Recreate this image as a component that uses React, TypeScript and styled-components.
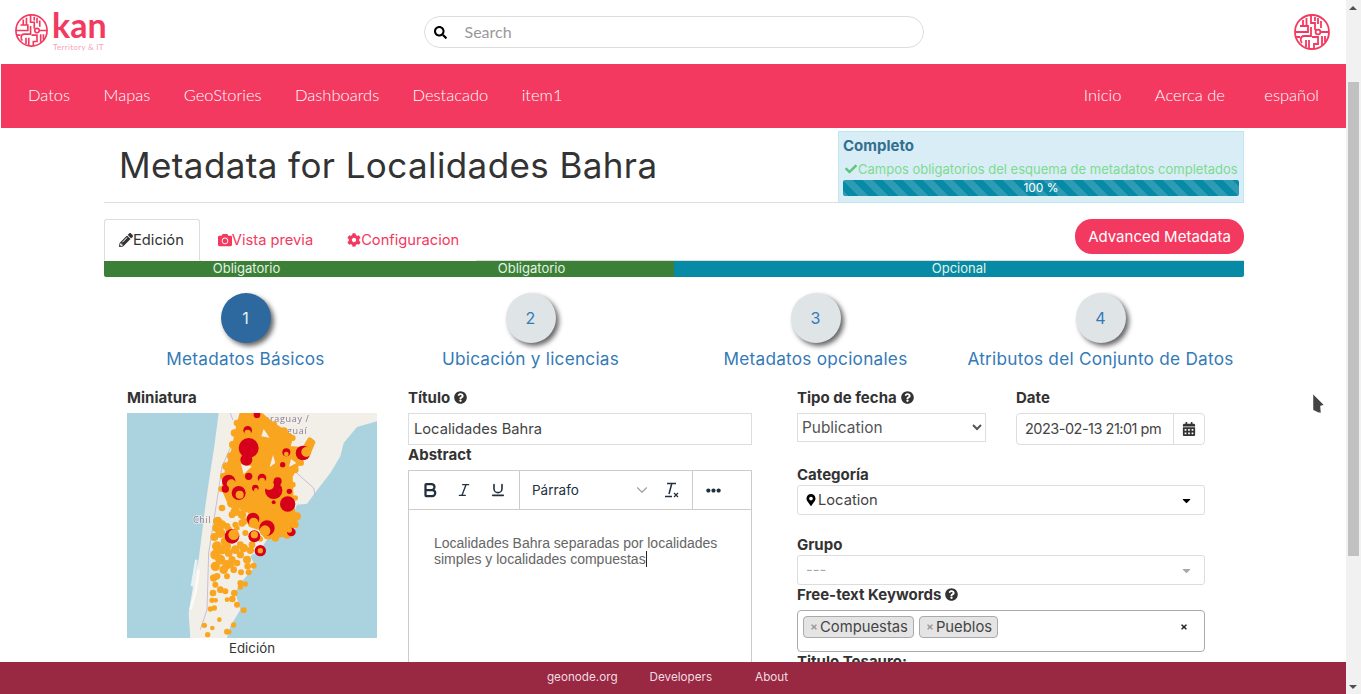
import { createGlobalStyle } from "styled-components";
import styled from "styled-components";
import {
  FaCalendarAlt,
  FaCamera,
  FaCaretDown,
  FaCheck,
  FaCog,
  FaEllipsisH,
  FaMapMarkerAlt,
  FaPencilAlt,
  FaQuestionCircle,
  FaSearch,
  FaTimes,
} from "react-icons/fa";
import { Bold, ChevronDown, Italic, Underline } from "lucide-react";

const PINK = "#f33960";
const ORANGE = "#f9a51f";
const RED = "#d7001a";
const BODY_FONT = `Inter, "Open Sans", "Liberation Sans", sans-serif`;
const NAV_FONT = `Lato, "Noto Sans", "Liberation Sans", sans-serif`;

const GlobalStyle = createGlobalStyle`
  html, body {
    margin: 0;
    height: 100%;
    overflow: hidden;
    background: #fff;
    font-family: ${BODY_FONT};
    color: #333;
  }
  * { box-sizing: border-box; }
`;

const Screen = styled.div`
  display: flex;
  height: 694px;
  position: relative;
`;

const Main = styled.div`
  flex: 1;
  min-width: 0;
  position: relative;
  overflow: hidden;
`;

const Header = styled.header`
  height: 64px;
  display: grid;
  grid-template-columns: 1fr auto 1fr;
  align-items: center;
  padding: 0 16px 0 15px;
`;

const Brand = styled.div`
  height: 33px;
  margin-top: -3px;
  display: flex;
  align-items: flex-start;
  gap: 4px;
  color: ${PINK};
`;

const BrandText = styled.div`
  display: flex;
  flex-direction: column;
  font-family: ${NAV_FONT};
  margin-top: -6px;
`;

const BrandName = styled.span`
  font-size: 34px;
  line-height: 34px;
  font-weight: 700;
`;

const BrandSub = styled.span`
  font-size: 8px;
  line-height: 10px;
  color: #f8a3b6;
  letter-spacing: 0.3px;
  padding-left: 1px;
`;

const SearchBox = styled.div`
  width: 500px;
  height: 32px;
  margin-left: 2px;
  display: flex;
  align-items: center;
  gap: 18px;
  padding: 0 9px 2px;
  border: 1px solid #ddd;
  border-radius: 16px;
  font-family: ${NAV_FONT};
  font-size: 16px;
  color: #999;
  svg { color: #000; font-size: 13px; margin-top: 2px; }
`;

const HeaderLogo = styled.div`
  width: 36px;
  height: 36px;
  justify-self: end;
`;

const NavBar = styled.nav`
  height: 64px;
  margin-left: 1px;
  background: ${PINK};
  display: flex;
  align-items: center;
  justify-content: space-between;
  padding: 0 27px 2px;
  font-family: ${NAV_FONT};
  font-size: 16.5px;
  font-weight: 300;
  color: #fff;
`;

const NavGroup = styled.div`
  display: flex;
  gap: 33.4px;
`;

const NavLanguage = styled.span`
  margin-left: 6px;
`;

const Container = styled.div`
  width: 1140px;
  margin-left: 104px;
`;

const TitleRow = styled.div`
  display: flex;
  height: 75px;
`;

const TitleBlock = styled.div`
  flex: 1;
  border-bottom: 1px solid #ddd;
  padding-left: 15px;
`;

const PageTitle = styled.h1`
  margin: 17px 0 0;
  font-size: 35px;
  line-height: 40px;
  letter-spacing: 0.4px;
  font-weight: 400;
  color: #333;
`;

const StatusBox = styled.div`
  width: 406px;
  height: 72px;
  margin-top: 3px;
  background: #d9edf7;
  border: 1px solid #bce8f1;
  padding: 6px 4px 0;
`;

const StatusTitle = styled.div`
  font-size: 15px;
  line-height: 16px;
  font-weight: 700;
  color: #31708f;
`;

const StatusText = styled.div`
  display: flex;
  align-items: center;
  gap: 1px;
  margin: 7px 0 0 2px;
  font-size: 13px;
  line-height: 16px;
  color: #7ddb8f;
  white-space: nowrap;
  svg { font-size: 12px; color: #5cc77a; }
`;

const StripedBar = styled.div`
  height: 16px;
  margin-top: 3px;
  border-radius: 2px;
  background-color: #078aa6;
  background-image: linear-gradient(
    45deg,
    rgba(255, 255, 255, 0.15) 25%,
    transparent 25%,
    transparent 50%,
    rgba(255, 255, 255, 0.15) 50%,
    rgba(255, 255, 255, 0.15) 75%,
    transparent 75%,
    transparent
  );
  background-size: 20px 20px;
  color: #fff;
  font-size: 12px;
  line-height: 16px;
  text-align: center;
`;

const TabsRow = styled.div`
  display: flex;
  justify-content: space-between;
  height: 58px;
  padding-top: 16px;
  border-bottom: 1px solid #ddd;
`;

const Tabs = styled.div`
  display: flex;
  align-items: stretch;
`;

const Tab = styled.div<{ $active?: boolean }>`
  display: flex;
  align-items: center;
  height: 42px;
  padding: ${(p) => (p.$active ? "0 15px 1px 14px" : "0 16px 2px")};
  margin-right: ${(p) => (p.$active ? "1px" : "0")};
  font-size: 14.7px;
  color: ${(p) => (p.$active ? "#333" : PINK)};
  background: #fff;
  border: 1px solid ${(p) => (p.$active ? "#ddd" : "transparent")};
  border-bottom: ${(p) => (p.$active ? "1px solid #fff" : "none")};
  border-radius: 3px 3px 0 0;
  svg { font-size: 14px; margin-top: 1px; }
`;

const AdvancedButton = styled.button`
  height: 35px;
  width: 169px;
  padding: 0;
  border: none;
  border-radius: 17px;
  background: ${PINK};
  color: #fff;
  font-family: ${BODY_FONT};
  font-size: 15px;
`;

const RequirementBar = styled.div`
  display: flex;
  height: 16px;
  border-radius: 0 0 2px 2px;
  overflow: hidden;
`;

const RequirementCell = styled.div<{ $color: string; $grow: number }>`
  flex: ${(p) => p.$grow};
  background: ${(p) => p.$color};
  color: #e4f3e4;
  font-size: 13px;
  line-height: 15px;
  text-align: center;
`;

const Steps = styled.div`
  display: grid;
  grid-template-columns: repeat(4, 285px);
  margin: 16px 0 0 -1px;
`;

const Step = styled.div`
  display: flex;
  flex-direction: column;
  align-items: center;
`;

const StepCircle = styled.div<{ $active?: boolean }>`
  width: 50px;
  height: 50px;
  border-radius: 50%;
  display: flex;
  align-items: center;
  justify-content: center;
  font-size: 16px;
  color: ${(p) => (p.$active ? "#e8f0f6" : "#337ab7")};
  background: ${(p) => (p.$active ? "#2d699e" : "#dfe4e6")};
  box-shadow: 3px 3px 5px #666;
`;

const StepLabel = styled.div`
  margin-top: 6px;
  font-size: 17.2px;
  line-height: 20px;
  letter-spacing: 0.25px;
  color: #337ab7;
  white-space: nowrap;
`;

const FormGrid = styled.div`
  display: grid;
  grid-template-columns: 281px 389px 408px;
  padding-left: 23px;
  margin-top: 21px;
`;

const FieldLabel = styled.div<{ $gap?: number }>`
  display: flex;
  align-items: center;
  gap: 4px;
  height: 16px;
  padding-bottom: 2px;
  margin-bottom: ${(p) => p.$gap ?? 7}px;
  font-size: 15px;
  font-weight: 700;
  color: #333;
  white-space: nowrap;
  svg { font-size: 13px; }
`;

const Thumbnail = styled.svg`
  display: block;
  width: 250px;
  height: 225px;
  filter: blur(0.4px);
`;

const ThumbCaption = styled.div`
  width: 250px;
  margin-top: 2px;
  text-align: center;
  font-size: 13.3px;
  line-height: 16px;
`;

const TextField = styled.input`
  display: block;
  width: 344px;
  height: 32px;
  margin-bottom: 2px;
  padding: 0 5px 1px;
  border: 1px solid #ddd;
  border-radius: 0;
  outline: none;
  font-family: ${BODY_FONT};
  font-size: 14.7px;
  color: #444;
`;

const Editor = styled.div`
  width: 344px;
  height: 300px;
  border: 1px solid #ccc;
`;

const EditorToolbar = styled.div`
  display: flex;
  height: 39px;
  border-bottom: 1px solid #ccc;
`;

const ToolGroup = styled.div<{ $width: number }>`
  width: ${(p) => p.$width}px;
  display: flex;
  align-items: center;
  border-right: 1px solid #ccc;
  color: #222f3e;
  &:last-child { border-right: none; padding-left: 13px; }
`;

const ToolButton = styled.div`
  width: 34px;
  margin-left: 4px;
  margin-right: -4px;
  display: flex;
  justify-content: center;
`;

const BlockSelect = styled.div`
  flex: 1;
  display: flex;
  align-items: center;
  padding: 0 12px;
  font-size: 13.5px;
  svg.chev { color: #9aa1a8; margin: 0 11px 0 auto; }
`;

const EditorBody = styled.div`
  padding: 25px;
  font-family: "Liberation Sans", Arial, sans-serif;
  font-size: 14px;
  line-height: 16px;
  color: #666;
`;

const Caret = styled.span`
  display: inline-block;
  width: 1px;
  height: 16px;
  background: #222;
  vertical-align: top;
`;

const DateRow = styled.div`
  display: grid;
  grid-template-columns: 189px 189px;
  column-gap: 30px;
  margin-bottom: 22px;
`;

const PlainSelect = styled.select`
  display: block;
  width: 189px;
  height: 29px;
  padding: 0;
  border: 1px solid #ddd;
  border-radius: 0;
  background: #fff;
  font-family: ${BODY_FONT};
  font-size: 15.4px;
  color: #555;
`;

const DateGroup = styled.div`
  display: flex;
  height: 32px;
  border: 1px solid #ddd;
  border-radius: 4px;
`;

const DateInput = styled.div`
  flex: 1;
  min-width: 0;
  padding: 0 8px;
  border-right: 1px solid #ddd;
  font-size: 14.5px;
  letter-spacing: -0.5px;
  line-height: 29px;
  color: #444;
  white-space: nowrap;
`;

const DateAddon = styled.div`
  width: 30px;
  flex: none;
  display: flex;
  align-items: center;
  justify-content: center;
  font-size: 14px;
  color: #333;
`;

const SelectBox = styled.div<{ $muted?: boolean; $gap: number }>`
  display: flex;
  align-items: center;
  justify-content: space-between;
  height: 30px;
  margin-bottom: ${(p) => p.$gap}px;
  padding: 0 11px 1px 8px;
  border: 1px solid #ddd;
  border-radius: 3px;
  font-size: 14.7px;
  color: ${(p) => (p.$muted ? "#aaa" : "#444")};
  svg.caret { font-size: 13px; margin-top: 1px; color: ${(p) => (p.$muted ? "#aaa" : "#000")}; }
`;

const SelectValue = styled.span`
  display: flex;
  align-items: center;
  gap: 1px;
  svg { font-size: 12px; margin-left: -1px; color: #000; }
`;

const TagBox = styled.div`
  display: flex;
  align-items: flex-start;
  gap: 5px;
  position: relative;
  height: 42px;
  margin-bottom: 2px;
  padding: 5px;
  border: 1px solid #aaa;
  border-radius: 4px;
`;

const Tag = styled.span`
  display: flex;
  align-items: center;
  gap: 2px;
  height: 22px;
  padding: 0 5px 1px 6px;
  border: 1px solid #aaa;
  border-radius: 4px;
  background: #e4e4e4;
  font-size: 14.8px;
  color: #444;
  svg { font-size: 8px; color: #999; }
`;

const TagClear = styled.span`
  position: absolute;
  right: 16px;
  top: 12px;
  font-size: 8px;
  color: #222;
`;

const Footer = styled.footer`
  position: absolute;
  left: 0;
  right: 0;
  bottom: 0;
  height: 32px;
  background: #992842;
  color: #f0dce1;
  font-size: 11.7px;
  line-height: 30px;
`;

const FooterLinks = styled.div`
  display: flex;
  justify-content: center;
  gap: 32px;
  padding-right: 11px;
`;

const FooterAbout = styled.span`
  margin-left: 11px;
`;

const ScrollTrack = styled.div`
  width: 15px;
  height: 694px;
  flex: none;
  position: relative;
  background: #f1f1f1;
`;

const ScrollArrow = styled.div<{ $down?: boolean }>`
  position: absolute;
  left: 3px;
  ${(p) => (p.$down ? "bottom: 5px" : "top: 6px")};
  width: 0;
  height: 0;
  border-left: 4px solid transparent;
  border-right: 4px solid transparent;
  ${(p) => (p.$down ? "border-top" : "border-bottom")}: 4px solid #505050;
`;

const ScrollThumb = styled.div`
  position: absolute;
  left: 2px;
  top: 82px;
  width: 11px;
  height: 474px;
  background: #c1c1c1;
`;

const Cursor = styled.svg`
  position: absolute;
  left: 1311px;
  top: 392px;
`;

const LogoMark = ({ size }: { size: number }) => (
  <svg width={size} height={size} viewBox="0 0 36 36" fill="none" stroke={PINK} strokeWidth="1.8">
    <circle cx="18" cy="18" r="17" />
    <path d="M1 18H14V12H6M9 12V6M12.500 12V4" />
    <path d="M17 1V9H21V16" />
    <path d="M21 7V3M24 10V4M27 14V7" />
    <path d="M17 13V22H10C6 22 6 27 8 29" />
    <path d="M2 23H6M12 26V33M15 26V35" />
    <path d="M18 23H24V30H20V35" />
    <circle cx="24" cy="18" r="2.400" />
    <path d="M26.500 18H35M28 22V31M31 22V28" />
  </svg>
);

const land =
  "M275 0 L262 100 L248 190 L235 280 L225 360 L215 440 L205 480 L195 540 L185 600 L190 675 L300 675 L310 640 L340 590 L325 540 L340 510 L385 460 L370 430 L400 410 L420 380 L500 360 L510 320 L500 300 L510 275 L540 272 L570 232 L610 180 L640 130 L650 90 L690 42 L750 25 L750 0 Z";

const orangeMass =
  "M345 0 L395 0 L430 30 L492 72 L482 105 L530 110 L548 80 L558 88 L545 118 L515 145 L490 190 L492 240 L498 300 L506 320 L494 342 L468 365 L418 372 L400 345 L370 335 L360 300 L340 280 L305 262 L290 225 L300 175 L320 110 L332 50 Z";

const holes = [
  "M410 48 L428 74 L403 70 Z",
  "M438 126 L445 150 L428 162 Z",
  "M492 138 L508 150 L486 162 Z",
  "M342 153 L375 160 L350 184 Z",
  "M338 293 L365 300 L352 328 Z",
  "M330 345 L360 332 L370 352 L340 364 Z",
];

const orangeDots: [number, number, number?][] = [
  [285, 285, 10], [315, 270, 15], [325, 295, 14], [345, 305, 13], [315, 305, 10], [345, 330, 11], [272, 325, 14],
  [285, 335, 13], [268, 345, 12], [300, 340, 10], [325, 335, 9], [352, 325, 10], [280, 360, 15], [262, 372, 12],
  [295, 385, 14], [270, 400, 15], [285, 410, 14], [265, 425, 15], [305, 420, 12], [325, 410, 13], [350, 405, 13],
  [375, 395, 10], [370, 412, 11], [280, 440, 15], [300, 455, 14], [265, 460, 14], [315, 440, 11], [340, 425, 11],
  [360, 440, 12], [362, 460, 10], [380, 458, 9], [290, 470, 13], [320, 470, 10], [342, 478, 9], [365, 478, 9],
  [300, 490, 9], [260, 495, 11], [270, 490, 10], [340, 510, 9], [355, 513, 8], [340, 522, 8], [265, 515, 9],
  [280, 530, 10], [295, 535, 9], [258, 540, 10], [322, 540, 10], [316, 558, 10], [255, 562, 8], [266, 562, 7],
  [300, 560, 7], [330, 575, 9], [262, 585, 8], [250, 588, 8], [350, 592, 9], [277, 620, 7], [232, 637, 8],
  [256, 645, 7], [320, 636, 8], [300, 656, 9], [242, 665, 8], [307, 657, 7], [330, 450, 10], [312, 455, 9],
  // bumps along the edge of the dense area
  [330, 30, 10], [322, 60, 11], [318, 95, 12], [312, 130, 12], [298, 160, 12], [290, 190, 11], [283, 228, 9],
  [440, 35, 10], [470, 55, 12], [497, 75, 9], [488, 108, 8], [522, 150, 9], [505, 170, 10], [497, 215, 9],
  [505, 255, 8], [510, 310, 12], [505, 335, 10], [480, 365, 12], [445, 375, 11], [425, 370, 10],
  [300, 400, 12], [340, 395, 10], [330, 345, 8], [305, 350, 10], [355, 360, 9], [400, 378, 8],
];

// x, y, r of a red cluster, then the offset and radius of the orange laid over it
const redClusters: [number, number, number, number, number, number][] = [
  [365, 105, 30, 0, 0, 0], [358, 140, 18, 0, -2, 0], [528, 120, 22, 10, -3, 15], [305, 205, 20, 8, 8, 14],
  [295, 228, 11, 0, 0, 0], [335, 240, 21, 3, 5, 12], [365, 190, 11, 0, 0, 0], [405, 195, 13, 0, 8, 9],
  [440, 232, 26, -14, -16, 15], [452, 205, 12, 0, 0, 0], [385, 225, 10, 2, 6, 6], [482, 273, 23, 0, 0, 0],
  [487, 235, 8, 0, 0, 0], [378, 318, 19, 2, 10, 14], [420, 345, 23, -6, 8, 16], [315, 370, 22, 5, -5, 16],
  [382, 370, 18, 0, -5, 11], [493, 357, 13, -6, -6, 8], [478, 118, 12, 0, 5, 7], [467, 155, 8, 0, 0, 0],
  [362, 52, 13, 0, 8, 10], [390, 5, 10, 0, 0, 0], [440, 268, 6, 0, 0, 0], [400, 413, 17, 0, 0, 8],
];

const ThumbnailMap = () => (
  <Thumbnail viewBox="0 0 750 675" role="img" aria-label="Mapa de localidades">
    <rect width="750" height="675" fill="#aad3df" />
    <path d={land} fill="#f2efe9" />
    <path d="M215 470 L205 540 L190 590 M208 440 L195 520" stroke="#fff" strokeWidth="8" opacity="0.7" fill="none" />
    <path d="M310 0 L318 22 M500 172 L560 225 L565 250 M310 105 L285 160 L275 230 L245 420 L240 590 L220 650" stroke="#c9bfd1" strokeWidth="3" fill="none" />
    <g fontFamily="'Open Sans', sans-serif" fontSize="27" letterSpacing="2" fill="#8c7b95" stroke="#f2efe9" strokeWidth="4" paintOrder="stroke">
      <text x="412" y="28">araguay /</text>
      <text x="480" y="62">guaí</text>
      <text x="198" y="331">Chil</text>
    </g>
    <path d={orangeMass} fill={ORANGE} stroke={ORANGE} strokeWidth="14" strokeLinejoin="round" />
    {holes.map((d) => (
      <path key={d} d={d} fill="#f2efe9" />
    ))}
    {orangeDots.map(([x, y, r]) => (
      <circle key={`${x}-${y}`} cx={x} cy={y} r={r ?? 8} fill={ORANGE} />
    ))}
    {redClusters.map(([x, y, r, dx, dy, inner]) => (
      <g key={`${x}-${y}`}>
        <circle cx={x} cy={y} r={r} fill={RED} />
        {inner > 0 && <circle cx={x + dx} cy={y + dy} r={inner} fill={ORANGE} />}
      </g>
    ))}
  </Thumbnail>
);

const ClearFormatIcon = () => (
  <svg width="18" height="18" viewBox="0 0 18 18" fill="none" stroke="#222f3e" strokeWidth="1.500">
    <path d="M5 2.500H14M9.800 2.500L7 13" />
    <path d="M3 15.500H10" />
    <path d="M12 12L16 16M16 12L12 16" strokeWidth="1.200" />
  </svg>
);

const App = () => {
  return (
    <Screen>
      <GlobalStyle />
      <Main>
        <Header>
          <Brand>
            <LogoMark size={33} />
            <BrandText>
              <BrandName>kan</BrandName>
              <BrandSub>Territory &amp; IT</BrandSub>
            </BrandText>
          </Brand>
          <SearchBox>
            <FaSearch />
            Search
          </SearchBox>
          <HeaderLogo>
            <LogoMark size={36} />
          </HeaderLogo>
        </Header>
        <NavBar>
          <NavGroup>
            <span>Datos</span>
            <span>Mapas</span>
            <span>GeoStories</span>
            <span>Dashboards</span>
            <span>Destacado</span>
            <span>item1</span>
          </NavGroup>
          <NavGroup>
            <span>Inicio</span>
            <span>Acerca de</span>
            <NavLanguage>español</NavLanguage>
          </NavGroup>
        </NavBar>
        <Container>
          <TitleRow>
            <TitleBlock>
              <PageTitle>Metadata for Localidades Bahra</PageTitle>
            </TitleBlock>
            <StatusBox>
              <StatusTitle>Completo</StatusTitle>
              <StatusText>
                <FaCheck />
                Campos obligatorios del esquema de metadatos completados
              </StatusText>
              <StripedBar>100 %</StripedBar>
            </StatusBox>
          </TitleRow>
          <TabsRow>
            <Tabs>
              <Tab $active>
                <FaPencilAlt />
                Edición
              </Tab>
              <Tab>
                <FaCamera />
                Vista previa
              </Tab>
              <Tab>
                <FaCog />
                Configuracion
              </Tab>
            </Tabs>
            <AdvancedButton>Advanced Metadata</AdvancedButton>
          </TabsRow>
          <RequirementBar>
            <RequirementCell $color="#3c8038" $grow={1}>Obligatorio</RequirementCell>
            <RequirementCell $color="#3c8038" $grow={1}>Obligatorio</RequirementCell>
            <RequirementCell $color="#078aa6" $grow={2}>Opcional</RequirementCell>
          </RequirementBar>
          <Steps>
            <Step>
              <StepCircle $active>1</StepCircle>
              <StepLabel>Metadatos Básicos</StepLabel>
            </Step>
            <Step>
              <StepCircle>2</StepCircle>
              <StepLabel>Ubicación y licencias</StepLabel>
            </Step>
            <Step>
              <StepCircle>3</StepCircle>
              <StepLabel>Metadatos opcionales</StepLabel>
            </Step>
            <Step>
              <StepCircle>4</StepCircle>
              <StepLabel>Atributos del Conjunto de Datos</StepLabel>
            </Step>
          </Steps>
          <FormGrid>
            <div>
              <FieldLabel>Miniatura</FieldLabel>
              <ThumbnailMap />
              <ThumbCaption>Edición</ThumbCaption>
            </div>
            <div>
              <FieldLabel>
                Título <FaQuestionCircle />
              </FieldLabel>
              <TextField readOnly value="Localidades Bahra" />
              <FieldLabel>Abstract</FieldLabel>
              <Editor>
                <EditorToolbar>
                  <ToolGroup $width={111}>
                    <ToolButton><Bold size={18} strokeWidth={3} /></ToolButton>
                    <ToolButton><Italic size={16} /></ToolButton>
                    <ToolButton><Underline size={16} strokeWidth={2.4} /></ToolButton>
                  </ToolGroup>
                  <ToolGroup $width={173}>
                    <BlockSelect>
                      Párrafo
                      <ChevronDown className="chev" size={18} strokeWidth={1.5} />
                      <ClearFormatIcon />
                    </BlockSelect>
                  </ToolGroup>
                  <ToolGroup $width={58}>
                    <FaEllipsisH size={15} />
                  </ToolGroup>
                </EditorToolbar>
                <EditorBody>
                  Localidades Bahra separadas por localidades simples y localidades compuestas
                  <Caret />
                </EditorBody>
              </Editor>
            </div>
            <div>
              <DateRow>
                <div>
                  <FieldLabel>
                    Tipo de fecha <FaQuestionCircle />
                  </FieldLabel>
                  <PlainSelect defaultValue="Publication">
                    <option>Publication</option>
                  </PlainSelect>
                </div>
                <div>
                  <FieldLabel>Date</FieldLabel>
                  <DateGroup>
                    <DateInput>2023-02-13 21:01 pm</DateInput>
                    <DateAddon>
                      <FaCalendarAlt />
                    </DateAddon>
                  </DateGroup>
                </div>
              </DateRow>
              <FieldLabel $gap={2}>Categoría</FieldLabel>
              <SelectBox $gap={22}>
                <SelectValue>
                  <FaMapMarkerAlt />
                  Location
                </SelectValue>
                <FaCaretDown className="caret" />
              </SelectBox>
              <FieldLabel $gap={2}>Grupo</FieldLabel>
              <SelectBox $muted $gap={2}>
                ---
                <FaCaretDown className="caret" />
              </SelectBox>
              <FieldLabel>
                Free-text Keywords <FaQuestionCircle />
              </FieldLabel>
              <TagBox>
                <Tag>
                  <FaTimes />
                  Compuestas
                </Tag>
                <Tag>
                  <FaTimes />
                  Pueblos
                </Tag>
                <TagClear>
                  <FaTimes />
                </TagClear>
              </TagBox>
              <FieldLabel>Titulo Tesauro:</FieldLabel>
            </div>
          </FormGrid>
        </Container>
        <Footer>
          <FooterLinks>
            <span>geonode.org</span>
            <span>Developers</span>
            <FooterAbout>About</FooterAbout>
          </FooterLinks>
        </Footer>
      </Main>
      <ScrollTrack>
        <ScrollArrow />
        <ScrollThumb />
        <ScrollArrow $down />
      </ScrollTrack>
      <Cursor width="18" height="24" viewBox="0 0 18 24">
        <path d="M2 2L13 13L9.500 14L10 21L7 20.500L2 18Z" fill="#444" stroke="#fff" strokeOpacity="0.6" strokeWidth="0.8" />
      </Cursor>
    </Screen>
  );
};

export default App;
